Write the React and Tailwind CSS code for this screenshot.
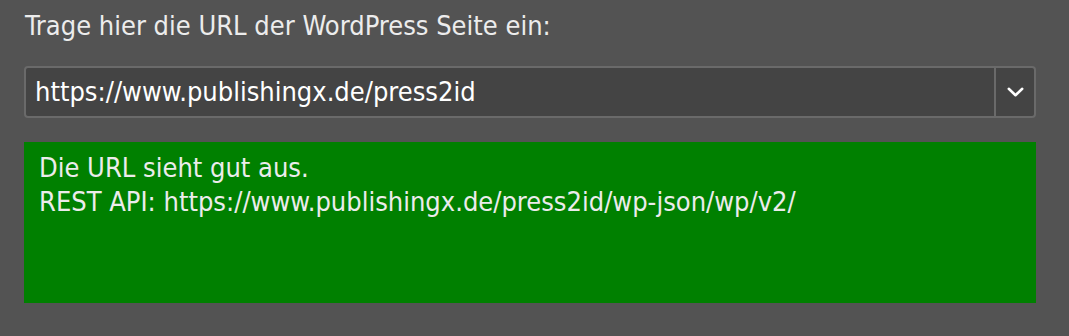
export default function App() {
    return (
        <div className="w-[1069px] h-[336px] bg-[#535353] pl-[24px] pt-[10px] text-[#ececec]" style={{ fontFamily: '"DejaVu Sans Condensed", "DejaVu Sans", sans-serif' }}>
            {/* Label */}
            <div className="h-[42px] pl-[1px] text-[27px] leading-[32px]">
                Trage hier die URL der WordPress Seite ein:
            </div>

            {/* URL combo box */}
            <div className="mt-[14px] w-[1012px] h-[52px] flex rounded-[4px] border-2 border-[#6a6a6a] bg-[#444444]">
                <div className="flex-1 flex items-center pl-[9px] text-[27px] text-white">
                    https://www.publishingx.de/press2id
                </div>
                <div className="w-[40px] border-l-2 border-[#6a6a6a] grid place-items-center">
                    <svg width="17" height="10" viewBox="0 0 17 10" fill="none">
                        <path d="M1.75 1.75l6.75 6.5 6.75-6.5" stroke="#ffffff" strokeWidth="2.5" strokeLinecap="round" strokeLinejoin="round" />
                    </svg>
                </div>
            </div>

            {/* Status message */}
            <div className="mt-[24px] w-[1012px] h-[161px] bg-[#008000] pl-[15px] pt-[9px] text-[27px] leading-[34px]">
                <div>Die URL sieht gut aus.</div>
                <div>REST API: https://www.publishingx.de/press2id/wp-json/wp/v2/</div>
            </div>
        </div>
    )
}
